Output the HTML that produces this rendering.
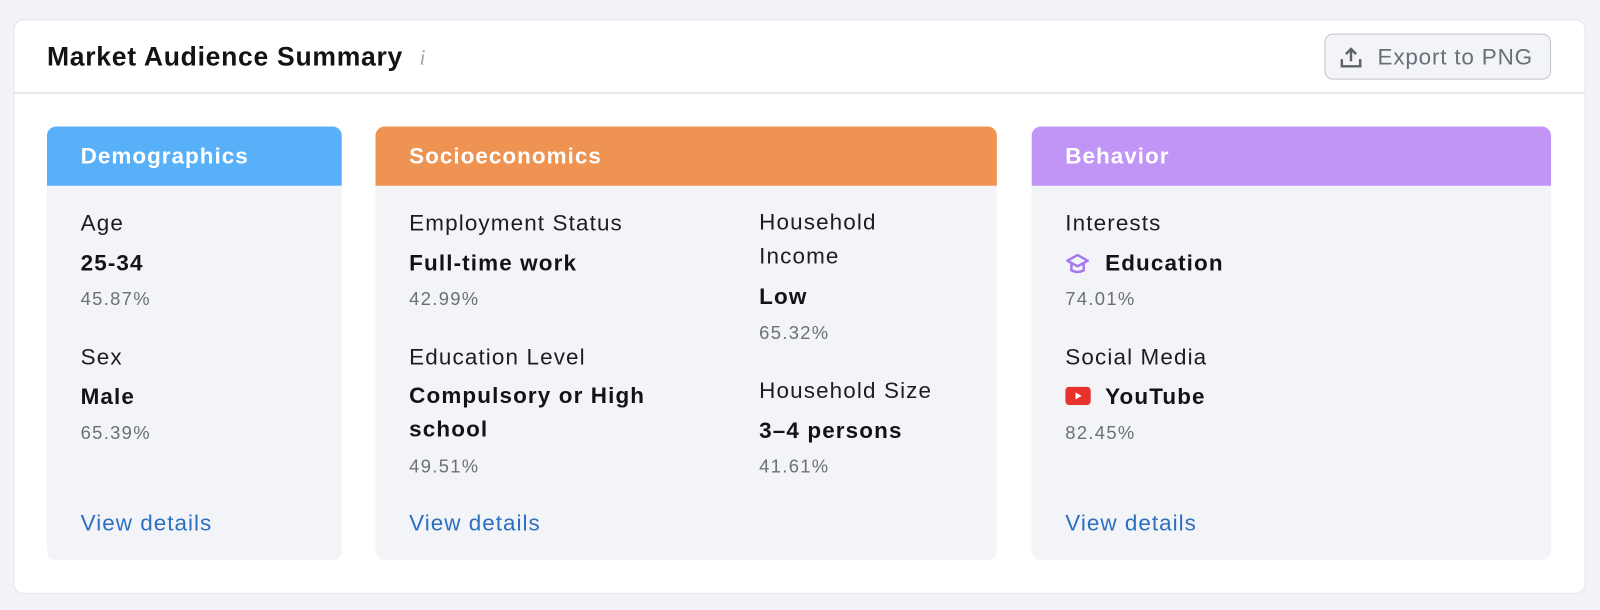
<!DOCTYPE html>
<html><head><meta charset="utf-8"><style>
*{margin:0;padding:0;box-sizing:border-box}
body{width:1600px;height:610px;background:#f2f3f7;font-family:"Liberation Sans",Arial,sans-serif;position:relative;overflow:hidden}
#w{position:absolute;left:0;top:0;width:1568px;height:598px;transform:scale(1.0204);transform-origin:0 0}
.outer{position:absolute;left:13px;top:19px;width:1541px;height:563px;background:#fff;border:1px solid #e4e5ea;border-radius:10px}
.hline{position:absolute;left:13px;top:90px;width:1541px;height:2px;background:#e6e7eb}
.title{position:absolute;left:46px;top:40px;font-size:26px;font-weight:bold;color:#121316;letter-spacing:0.7px}
.info{position:absolute;left:411px;top:43px;font-size:22px;color:#a6a8b0;font-style:italic;font-family:"Liberation Serif",serif}
.btn{position:absolute;left:1298px;top:33px;width:222px;height:45px;border:1px solid #c3c5cc;border-radius:8px;background:#f3f4f7;color:#6b6e78;font-size:22px;letter-spacing:0.8px;line-height:43px;padding-left:51px}
.btn svg{position:absolute;left:13px;top:10px}
.card{position:absolute;top:124px;height:425px;background:#f3f4f8;border-radius:9px;overflow:hidden}
.card .h{height:58px;color:#fff;font-weight:bold;font-size:22px;letter-spacing:1px;line-height:58px;padding-left:33px}
.t{position:absolute;font-size:22px;letter-spacing:1.1px;color:#1c1d22;white-space:nowrap}
.b{position:absolute;font-size:22px;letter-spacing:1.1px;font-weight:bold;color:#121316;white-space:nowrap}
.p{position:absolute;font-size:18px;letter-spacing:1.3px;color:#6c6f78}
.l{position:absolute;font-size:22px;letter-spacing:1px;color:#2b6fc2}
</style></head><body><div id="w">
<div class="outer"></div>
<div class="hline"></div>
<div class="title">Market Audience Summary</div>
<div class="info">i</div>
<div class="btn"><svg width="24" height="24" viewBox="0 0 24 24"><path d="M12 16V4M7 9l5-5 5 5" fill="none" stroke="#5e616b" stroke-width="2.4"/><path d="M3 14v7h18v-7" fill="none" stroke="#5e616b" stroke-width="2.4"/></svg>Export to PNG</div>

<div class="card" style="left:46px;width:289px"><div class="h" style="background:#58b1f8">Demographics</div>
<div class="t" style="left:33px;top:82px">Age</div>
<div class="b" style="left:33px;top:121px">25-34</div>
<div class="p" style="left:33px;top:159px">45.87%</div>
<div class="t" style="left:33px;top:213px">Sex</div>
<div class="b" style="left:33px;top:252px">Male</div>
<div class="p" style="left:33px;top:290px">65.39%</div>
<div class="l" style="left:33px;top:376px">View details</div>
</div>

<div class="card" style="left:368px;width:609px"><div class="h" style="background:#ef9352">Socioeconomics</div>
<div class="t" style="left:33px;top:82px">Employment Status</div>
<div class="b" style="left:33px;top:121px">Full-time work</div>
<div class="p" style="left:33px;top:159px">42.99%</div>
<div class="t" style="left:33px;top:213px">Education Level</div>
<div class="b" style="left:33px;line-height:33px;top:247px">Compulsory or High<br>school</div>
<div class="p" style="left:33px;top:323px">49.51%</div>
<div class="t" style="left:376px;line-height:33px;top:77px">Household<br>Income</div>
<div class="b" style="left:376px;top:154px">Low</div>
<div class="p" style="left:376px;top:192px">65.32%</div>
<div class="t" style="left:376px;top:246px">Household Size</div>
<div class="b" style="left:376px;top:285px">3–4 persons</div>
<div class="p" style="left:376px;top:323px">41.61%</div>
<div class="l" style="left:33px;top:376px">View details</div>
</div>

<div class="card" style="left:1011px;width:509px"><div class="h" style="background:#c095f6">Behavior</div>
<div class="t" style="left:33px;top:82px">Interests</div>
<svg style="position:absolute;left:33px;top:122px" width="24" height="24" viewBox="0 0 24 24"><path d="M12 4L2 9.5l10 5.5 10-5.5z" fill="none" stroke="#a576ee" stroke-width="2.4" stroke-linejoin="round"/><path d="M6 12v7q6 3 12 0v-7" fill="none" stroke="#a576ee" stroke-width="2.4"/></svg>
<div class="b" style="left:72px;top:121px">Education</div>
<div class="p" style="left:33px;top:159px">74.01%</div>
<div class="t" style="left:33px;top:213px">Social Media</div>
<svg style="position:absolute;left:33px;top:255px" width="25" height="18" viewBox="0 0 25 18"><rect width="25" height="18" rx="4" fill="#e8322c"/><path d="M10 5.5l6 3.5-6 3.5z" fill="#fff"/></svg>
<div class="b" style="left:72px;top:252px">YouTube</div>
<div class="p" style="left:33px;top:290px">82.45%</div>
<div class="l" style="left:33px;top:376px">View details</div>
</div>
</div></body></html>
